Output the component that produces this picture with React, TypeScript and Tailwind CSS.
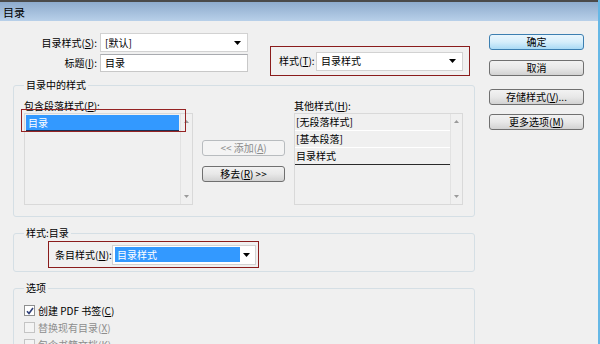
import React from 'react';

const font = "font-['Noto_Sans_CJK_SC','Noto_Sans_CJK_JP',sans-serif]";

function DropArrow() {
  return (
    <svg width="7" height="4" viewBox="0 0 7 4" className="shrink-0">
      <path d="M0 0h7L3.5 4z" fill="#000" />
    </svg>
  );
}

function ScrollArrow({ up }: { up?: boolean }) {
  return (
    <svg width="5" height="3" viewBox="0 0 5 3">
      <path d={up ? 'M0 3h5L2.5 0z' : 'M0 0h5L2.5 3z'} fill="#9a9a9a" />
    </svg>
  );
}

function Select({ text, className = '' }: { text: string; className?: string }) {
  return (
    <div className={`h-[19px] bg-white border border-[#d2d2d2] flex items-center pl-[4px] pr-[6px] ${className}`}>
      <span className="flex-1 whitespace-nowrap">{text}</span>
      <DropArrow />
    </div>
  );
}

function Btn({ children, primary, disabled, className = '' }: { children: React.ReactNode; primary?: boolean; disabled?: boolean; className?: string }) {
  let look = 'border-[#707070] bg-gradient-to-b from-[#f2f2f2] via-[#e8e8e8] to-[#d2d2d2] text-black';
  if (primary) look = 'border-[#3c7fb1] bg-gradient-to-b from-[#eaf6fd] via-[#d6eefb] to-[#a9daf5] text-black';
  if (disabled) look = 'border-[#b8bcbf] bg-[#f4f4f4] text-[#8b8b8b]';
  return (
    <div className={`h-[16px] border rounded-[3px] flex items-center justify-center leading-[12px] ${look} ${className}`}>
      {children}
    </div>
  );
}

function Check({ checked, disabled, label }: { checked?: boolean; disabled?: boolean; label: React.ReactNode }) {
  return (
    <div className={`h-[17px] flex items-center ${disabled ? 'text-[#8d8d8d]' : ''}`}>
      <div className={`w-[11px] h-[11px] border flex items-center justify-center ${disabled ? 'border-[#c4c4c4] bg-[#f4f4f4]' : 'border-[#8e8f8f] bg-white'}`}>
        {checked && (
          <svg width="8" height="8" viewBox="0 0 8 8">
            <path d="M1 4.2l2 2.3L7 1" stroke="#2e3f78" strokeWidth="1.6" fill="none" />
          </svg>
        )}
      </div>
      <span className="ml-[3px]">{label}</span>
    </div>
  );
}

export default function App() {
  return (
    <div className={`w-[600px] h-[344px] overflow-hidden bg-[#f0f0f0] border-r-2 border-[#66b8e6] text-[10px] leading-[12px] text-black ${font}`}>
      {/* title bar */}
      <div className="h-[21px] border-t-2 border-[#4a4a4a] bg-gradient-to-b from-[#8eabcd] to-[#b8d0e9] pl-[3px] flex items-center text-[11px]">
        目录
      </div>

      <div className="flex">
        {/* left side */}
        <div className="w-[476px]">
          <div className="flex pt-[12px]">
            <div className="grid grid-cols-[97px_148px] gap-x-[3px] gap-y-[2px] items-center content-start">
              <span className="text-right">目录样式(<u>S</u>):</span>
              <Select text="[默认]" />
              <span className="text-right">标题(<u>I</u>):</span>
              <div className="h-[18px] bg-white border border-[#c8c8c8] border-t-[#a9abb0] flex items-center pl-[4px]">目录</div>
            </div>
            <div className="ml-[22px] mt-[13px] w-[200px] h-[30px] border border-[#8a1c1c] flex items-center pl-[8px]">
              <span>样式(<u>T</u>):</span>
              <Select text="目录样式" className="ml-auto mr-[6px] w-[147px]" />
            </div>
          </div>

          {/* 目录中的样式 */}
          <fieldset className="ml-[13px] w-[462px] mt-[3px] border border-[#d5dfe5] rounded-[3px] px-[10px] pb-[11px]">
            <legend className="px-[2px] leading-[12px]">目录中的样式</legend>
            <div className="flex pt-[9px]">
              <div className="w-[169px]">
                <div>包含段落样式(<u>P</u>):</div>
                <div className="relative mt-[1px] h-[92px] border border-[#d9d9d9] bg-[#f0f0f0] flex">
                  <div className="flex-1 p-[1px]">
                    <div className="h-[16px] bg-[#3399ff] text-white pl-[2px] flex items-center border-b border-[#1d2f52]">目录</div>
                  </div>
                  <div className="w-[12px] border-l border-[#e2e2e2] flex flex-col justify-between items-center py-[6px]">
                    <ScrollArrow up />
                    <ScrollArrow />
                  </div>
                  <div className="absolute left-[-4px] top-[-5px] w-[165px] h-[23px] border border-[#952323]" />
                </div>
              </div>

              <div className="ml-[9px] w-[83px] pt-[40px]">
                <Btn disabled className="h-[15px]">&lt;&lt; 添加(<u>A</u>)</Btn>
                <Btn className="mt-[10px] h-[15px]">移去(<u>R</u>) &gt;&gt;</Btn>
              </div>

              <div className="ml-[9px] w-[169px]">
                <div>其他样式(<u>H</u>):</div>
                <div className="mt-[1px] h-[92px] border border-[#d9d9d9] bg-[#f0f0f0] flex">
                  <div className="flex-1">
                    <div className="h-[17px] border-b border-white pl-[1px] flex items-center">[无段落样式]</div>
                    <div className="h-[17px] border-b border-white pl-[1px] flex items-center">[基本段落]</div>
                    <div className="h-[17px] border-b border-[#2a2a2a] pl-[1px] flex items-center">目录样式</div>
                  </div>
                  <div className="w-[12px] border-l border-[#e2e2e2] flex flex-col justify-between items-center py-[6px]">
                    <ScrollArrow up />
                    <ScrollArrow />
                  </div>
                </div>
              </div>
            </div>
          </fieldset>

          {/* 样式:目录 */}
          <fieldset className="ml-[13px] w-[462px] mt-[10px] border border-[#d5dfe5] rounded-[3px] px-[10px] pb-[3px]">
            <legend className="px-[2px] leading-[12px]">样式:目录</legend>
            <div className="ml-[24px] mt-[2px] w-[211px] h-[27px] border border-[#8a1c1c] flex items-center pl-[6px]">
              <span>条目样式(<u>N</u>):</span>
              <div className="ml-auto mr-[2px] w-[144px] h-[20px] bg-white border border-[#d2d2d2] flex items-center pr-[5px]">
                <div className="ml-[2px] w-[125px] h-[15px] bg-[#3399ff] text-white pl-[2px] flex items-center">目录样式</div>
                <span className="ml-auto"><DropArrow /></span>
              </div>
            </div>
          </fieldset>

          {/* 选项 */}
          <fieldset className="ml-[13px] w-[462px] mt-[10px] border border-[#d5dfe5] rounded-[3px] px-[10px] pt-[8px] pb-[20px]">
            <legend className="px-[2px] leading-[12px]">选项</legend>
            <Check checked label={<>创建 PDF 书签(<u>C</u>)</>} />
            <Check disabled label={<>替换现有目录(<u>X</u>)</>} />
            <Check disabled label={<>包含书籍文档(<u>K</u>)</>} />
          </fieldset>
        </div>

        {/* right buttons */}
        <div className="ml-[13px] w-[95px] pt-[13px]">
          <Btn primary>确定</Btn>
          <Btn className="mt-[10px]">取消</Btn>
          <Btn className="mt-[13px]">存储样式(<u>V</u>)...</Btn>
          <Btn className="mt-[9px]">更多选项(<u>M</u>)</Btn>
        </div>
      </div>
    </div>
  );
}
